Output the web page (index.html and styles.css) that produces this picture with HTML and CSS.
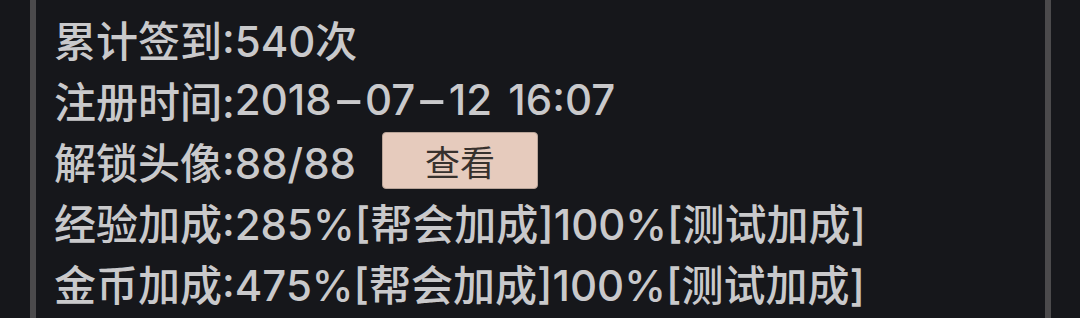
FILE: index.html
```html
<!DOCTYPE html>
<html lang="zh-CN">
  <head>
    <meta charset="UTF-8" />
    <meta name="viewport" content="width=device-width, initial-scale=1.0" />
    <title>角色信息</title>
    <link rel="stylesheet" href="styles.css">
  </head>
  <body>
    <div class="info-panel">
      <div class="info-row">累计签到:540次</div>
      <div class="info-row">注册时间:<span class="date">2018<span class="dash">-</span>07<span class="dash">-</span>12 16:07</span></div>
      <div class="info-row">
        <span>解锁头像:88/88</span>
        <button class="view-btn">查看</button>
      </div>
      <div class="info-row">经验加成:285%[帮会加成]100%[测试加成]</div>
      <div class="info-row">金币加成:475%[帮会加成]100%[测试加成]</div>
    </div>
  </body>
</html>
```

FILE: styles.css
```css
html,
body {
  margin: 0;
  height: 100%;
  background-color: #16171b;
}

body {
  font-family: Inter, "Noto Sans CJK SC", sans-serif;
  font-weight: 500;
  color: #c9c9cb;
  overflow: hidden;
}

.info-panel {
  margin-left: 30px;
  width: 1021px;
  height: 100%;
  box-sizing: border-box;
  border-left: 6px solid #4b4a4c;
  border-right: 6px solid #4b4a4c;
  padding: 8px 0 0 18px;
}

.info-row {
  display: flex;
  align-items: center;
  height: 61px;
  font-size: 42px;
  white-space: nowrap;
}

.date {
  word-spacing: 5px;
}

/* the game font draws a wide dash */
.dash {
  display: inline-block;
  margin: 0 7px;
  transform: scaleX(1.7);
}

.view-btn {
  margin-left: 26px;
  width: 156px;
  height: 57px;
  border: 1px solid #b8a498;
  border-radius: 4px;
  background-color: #e6cbbd;
  color: #37312d;
  font-family: "Noto Sans CJK SC", sans-serif;
  font-weight: 400;
  font-size: 35px;
  line-height: 1;
  padding: 0;
}
```
